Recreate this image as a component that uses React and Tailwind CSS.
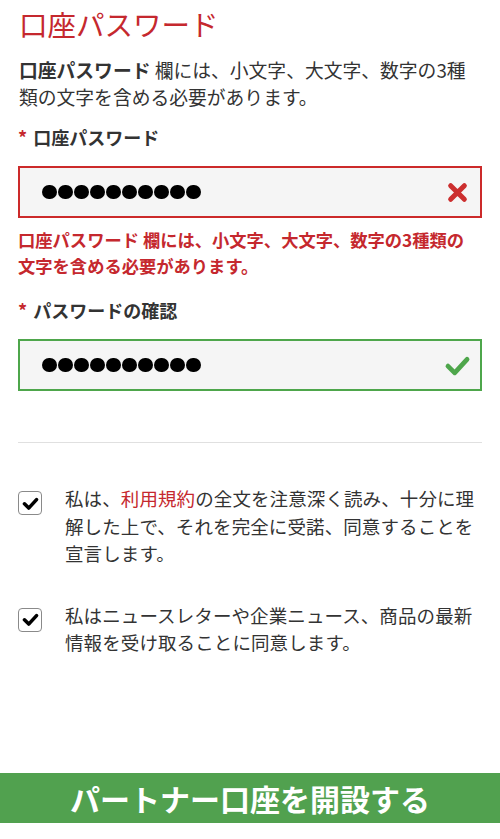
import React from "react";

const font = { fontFamily: '"Noto Sans CJK JP", "Noto Sans", sans-serif' };

function Dots() {
  return (
    <div className="flex gap-[1.5px]">
      {Array.from({ length: 10 }).map((_, i) => (
        <span key={i} className="block w-[14.5px] h-[14.5px] rounded-full bg-black" />
      ))}
    </div>
  );
}

function Check({ className, w = 4.2 }) {
  return (
    <svg viewBox="0 0 24 24" className={className}>
      <path d="M3.5 12.5 L9.5 18.5 L20.5 6.5" fill="none" stroke="currentColor" strokeWidth={w} strokeLinecap="round" strokeLinejoin="round" />
    </svg>
  );
}

function Cross({ className }) {
  return (
    <svg viewBox="0 0 20 20" className={className}>
      <path d="M3.5 3.5 L16.5 16.5 M16.5 3.5 L3.5 16.5" fill="none" stroke="currentColor" strokeWidth="4.8" strokeLinecap="round" />
    </svg>
  );
}

function CheckBox() {
  return (
    <div className="w-[24px] h-[24px] shrink-0 rounded-[4px] border-[1.5px] border-[#8a8a8a] bg-white flex items-center justify-center mt-[6px]">
      <Check className="w-[17px] h-[17px] text-black" w={5} />
    </div>
  );
}

export default function App() {
  return (
    <div style={font} className="w-[500px] h-[839px] bg-white text-[#333] flex flex-col">
      <div className="px-[18px]">
        <h1 className="pt-[4px] text-[28.5px] leading-[40px] text-[#c5282e] font-normal pl-[1px]">口座パスワード</h1>
        <p className="mt-[12px] text-[18.8px] leading-[27px] pl-[1px]">
          <span className="font-bold">口座パスワード</span> 欄には、小文字、大文字、数字の3種<br />類の文字を含める必要があります。
        </p>
        <div className="mt-[14px] text-[18px] leading-[27px] font-bold flex items-center">
          <span className="text-[#c5282e] mr-[6px]">*</span>
          <span>口座パスワード</span>
        </div>
        <div className="mt-[15px] h-[52px] border-2 border-[#cc2a2a] bg-[#f5f5f5] flex items-center justify-between pl-[22px] pr-[12px]">
          <Dots />
          <Cross className="w-[21px] h-[21px] text-[#cc2f2f]" />
        </div>
        <p className="mt-[9px] text-[17.3px] leading-[26px] font-bold text-[#c5282e] whitespace-nowrap">
          口座パスワード 欄には、小文字、大文字、数字の3種類の<br />文字を含める必要があります。
        </p>
        <div className="mt-[18px] text-[18px] leading-[27px] font-bold flex items-center">
          <span className="text-[#c5282e] mr-[6px]">*</span>
          <span>パスワードの確認</span>
        </div>
        <div className="mt-[15px] h-[52px] border-2 border-[#4ea64b] bg-[#f5f5f5] flex items-center justify-between pl-[22px] pr-[9px]">
          <Dots />
          <Check className="w-[27px] h-[27px] text-[#4ea64b]" />
        </div>
        <div className="mt-[51px] h-px bg-[#e0e0e0]" />
        <div className="mt-[42px] flex gap-[23px]">
          <CheckBox />
          <p className="text-[18.5px] leading-[27.5px] tracking-[0.1px]">
            私は、<span className="text-[#c5282e]">利用規約</span>の全文を注意深く読み、十分に理解した上で、それを完全に受諾、同意することを宣言します。
          </p>
        </div>
        <div className="mt-[34px] flex gap-[23px]">
          <CheckBox />
          <p className="text-[18.5px] leading-[27.5px] tracking-[0.1px]">
            私はニュースレターや企業ニュース、商品の最新情報を受け取ることに同意します。
          </p>
        </div>
      </div>
      <button className="mt-[116px] h-[50px] w-full bg-[#51a14f] text-white text-[30px] font-bold leading-[50px] text-center">
        パートナー口座を開設する
      </button>
    </div>
  );
}
